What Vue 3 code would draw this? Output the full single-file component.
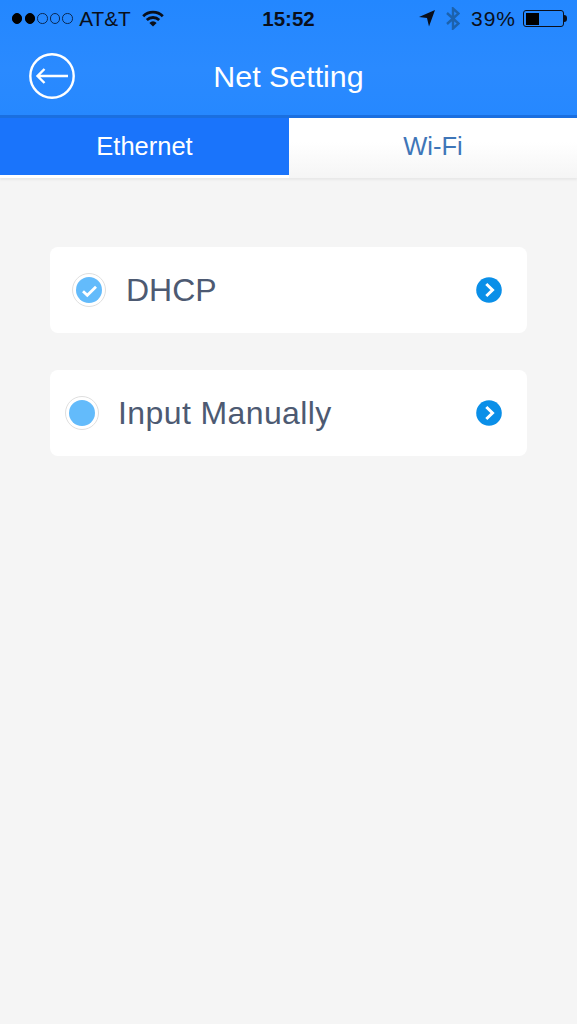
<template>
  <div class="page">
    <header class="top">
      <div class="status">
        <div class="status-left">
          <span class="dots">
            <i v-for="d in signal" :key="d.id" class="dot" :class="{ on: d.on }"></i>
          </span>
          <span class="carrier">AT&amp;T</span>
          <svg class="wifi" width="22" height="17" viewBox="0 0 22 17">
            <path d="M1.2 6.2 A14 14 0 0 1 20.8 6.2" fill="none" stroke="#0a0f1a" stroke-width="2.8" />
            <path d="M4.8 10 A9 9 0 0 1 17.2 10" fill="none" stroke="#0a0f1a" stroke-width="2.8" />
            <path d="M11 16.5 L7.4 12.9 A5 5 0 0 1 14.6 12.9 Z" fill="#0a0f1a" />
          </svg>
        </div>
        <div class="clock">15:52</div>
        <div class="status-right">
          <svg class="arrow" width="16" height="17" viewBox="0 0 16 17">
            <path d="M0 7 L16 0 L10 16.5 L8 8 Z" fill="#0a0f1a" />
          </svg>
          <svg class="bt" width="14" height="23" viewBox="0 0 14 23">
            <path d="M1 6 L12.5 16.5 L7 21.5 V1.5 L12.5 6.5 L1 17" fill="none" stroke="#1c62ad" stroke-width="2.4" />
          </svg>
          <span class="pct">39%</span>
          <span class="battery"><i class="level"></i></span>
          <i class="nub"></i>
        </div>
      </div>
      <div class="nav">
        <button class="back" aria-label="Back">
          <svg width="48" height="48" viewBox="0 0 48 48">
            <circle cx="24" cy="24" r="21.7" fill="none" stroke="#fff" stroke-width="2.4" />
            <path d="M40 24 H10 M16.5 17 L9.5 24 L16.5 31" fill="none" stroke="#fff" stroke-width="2.4" />
          </svg>
        </button>
        <h1>Net Setting</h1>
      </div>
    </header>

    <div class="tabs">
      <div class="tab active">Ethernet</div>
      <div class="tab">Wi-Fi</div>
    </div>

    <main class="list">
      <section v-for="row in rows" :key="row.label" class="card" :class="row.cls">
        <span class="radio">
          <span class="fill">
            <svg v-if="row.checked" width="26" height="26" viewBox="0 0 26 26">
              <path d="M7 14.2 L11.3 18.2 L20 9.8" fill="none" stroke="#fff" stroke-width="2.8" />
            </svg>
          </span>
        </span>
        <span class="label">{{ row.label }}</span>
        <svg class="go" width="26" height="26" viewBox="0 0 26 26">
          <circle cx="13" cy="13" r="12.8" fill="#0a8fe8" />
          <path d="M10.3 7 L16.5 13 L10.3 19" fill="none" stroke="#fff" stroke-width="3" />
        </svg>
      </section>
    </main>
  </div>
</template>

<script setup>
const signal = [
  { id: 1, on: true },
  { id: 2, on: true },
  { id: 3, on: false },
  { id: 4, on: false },
  { id: 5, on: false }
]

const rows = [
  { label: 'DHCP', checked: true, cls: 'dhcp' },
  { label: 'Input Manually', checked: false, cls: 'manual' }
]
</script>

<style>
html, body { margin: 0; background: #f5f5f5; }
</style>

<style scoped>
.page {
  min-height: 1024px;
  background: #f5f5f5;
  font-family: "Liberation Sans", Arial, sans-serif;
}

/* top bar */
.top {
  height: 115px;
  background: linear-gradient(#2387ff, #2a8aff 60%, #2688ff);
  border-bottom: 3px solid #1a6fe0;
}
.status {
  height: 37px;
  display: grid;
  grid-template-columns: 1fr auto 1fr;
  align-items: center;
  color: #0a0f1a;
  font-size: 20.5px;
}
.status-left { display: flex; align-items: center; padding-left: 12px; }
.dots { display: flex; gap: 2.2px; margin-right: 6.5px; }
.dot {
  width: 10.4px;
  height: 10.4px;
  box-sizing: border-box;
  border: 1.2px solid #0a2a55;
  border-radius: 50%;
}
.dot.on { background: #000; border-color: #000; }
.carrier { font-size: 20.8px; }
.wifi { margin-left: 11px; }
.clock { font-weight: 700; }
.status-right {
  display: flex;
  align-items: center;
  justify-content: flex-end;
  padding-right: 10px;
}
.arrow { margin-right: 11px; }
.bt { margin-right: 11px; }
.pct { font-size: 21px; letter-spacing: 1px; margin-right: 7px; }
.battery {
  width: 41px;
  height: 17px;
  box-sizing: border-box;
  border: 1.3px solid #0a0f1a;
  border-radius: 3px;
  padding: 1.5px;
  display: flex;
}
.level { width: 13px; background: #000; }
.nub { width: 3px; height: 7px; background: #0a0f1a; border-radius: 0 3px 3px 0; }

.nav {
  height: 78px;
  display: flex;
  align-items: flex-start;
  justify-content: center;
  position: relative;
}
.nav h1 {
  margin: 19px 0 0;
  font-size: 30.4px;
  line-height: 40px;
  font-weight: 400;
  color: #fff;
}
.back {
  position: absolute;
  left: 28px;
  top: 15px;
  padding: 0;
  border: 0;
  background: none;
  line-height: 0;
}

/* tabs */
.tabs {
  display: grid;
  grid-template-columns: 289px 1fr;
  height: 60px;
  box-shadow: 0 2px 2px #e8e8e8;
}
.tab {
  box-sizing: border-box;
  padding-bottom: 3px;
  display: flex;
  align-items: center;
  justify-content: center;
  font-size: 25.5px;
  color: #3f76b8;
  background: linear-gradient(#fff 40%, #f5f5f5);
}
.tab.active {
  padding-bottom: 0;
  background: #1a74fb;
  color: #fff;
  border-bottom: 3px solid #fff;
}

/* rows */
.list {
  display: flex;
  flex-direction: column;
  gap: 37px;
  padding: 69px 50px 0;
}
.card {
  height: 86px;
  background: #fff;
  border-radius: 8px;
  display: flex;
  align-items: center;
  padding-right: 25px;
}
.dhcp { padding-left: 22px; }
.manual { padding-left: 15px; }
.radio {
  width: 34px;
  height: 34px;
  box-sizing: border-box;
  border: 1.4px solid #dfdfdf;
  border-radius: 50%;
  display: flex;
  align-items: center;
  justify-content: center;
  flex: none;
}
.fill {
  width: 26px;
  height: 26px;
  border-radius: 50%;
  background: #63bbfb;
  display: flex;
  align-items: center;
  justify-content: center;
}
.label {
  margin-left: 20px;
  font-size: 32px;
  color: #4d5a72;
  flex: 1;
}
.manual .label { margin-left: 19px; letter-spacing: 0.4px; }
.go { flex: none; }
</style>
